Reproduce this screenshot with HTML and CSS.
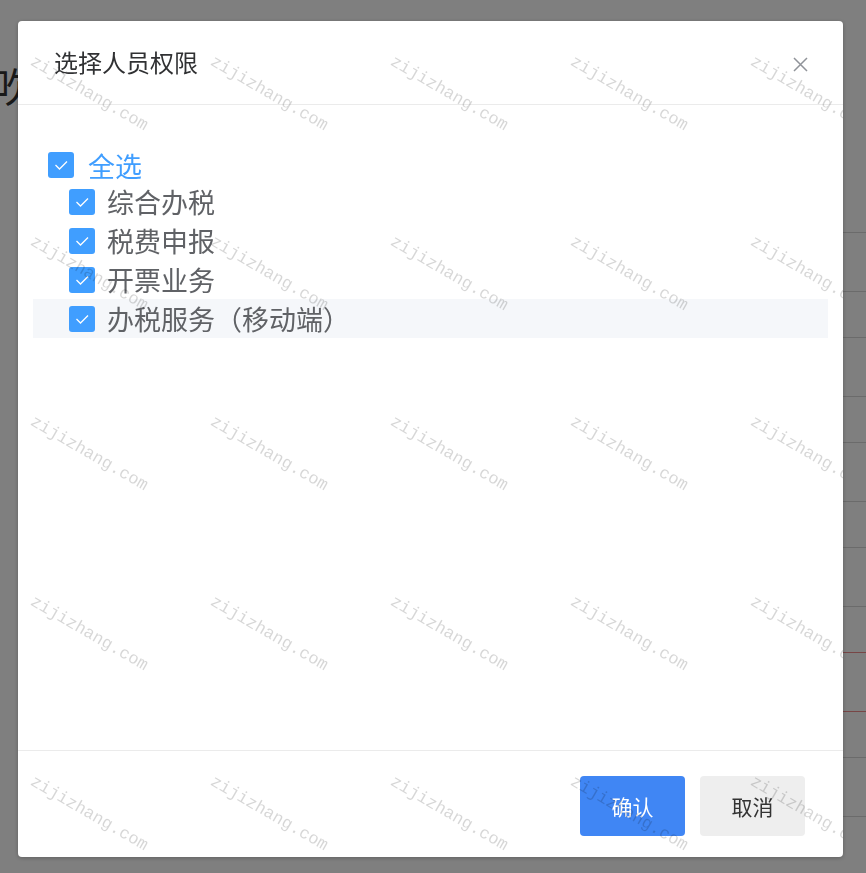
FILE: index.html
```html
<!DOCTYPE html>
<html lang="zh-CN">
<head>
<meta charset="utf-8">
<title>选择人员权限</title>
<link rel="stylesheet" href="styles.css">
</head>
<body>
<div class="page">
  <div class="page-head">吹</div>
  <div class="table">
    <div class="row tall"></div>
    <div class="row short"></div>
    <div class="row tall"></div>
    <div class="row short"></div>
    <div class="row tall"></div>
    <div class="row short"></div>
    <div class="row tall"></div>
    <div class="row short flag"></div>
    <div class="row tall flag"></div>
    <div class="row short"></div>
    <div class="row tall"></div>
  </div>
</div>

<div class="mask">
  <div class="dialog">
    <div class="dialog-header">
      <span class="dialog-title">选择人员权限</span>
      <button class="dialog-close" type="button" aria-label="关闭">
        <svg width="15" height="15" viewBox="0 0 15 15"><path d="M1 1 L14 14 M14 1 L1 14" stroke="#909399" stroke-width="1.5" fill="none"/></svg>
      </button>
    </div>

    <div class="dialog-body">
      <div class="tree">
        <div class="tree-node root">
          <span class="checkbox"><svg width="26" height="26" viewBox="0 0 26 26"><polyline points="7.5,13 11.5,17 19,9.5" fill="none" stroke="#fff" stroke-width="1.3"/></svg></span>
          <span class="label">全选</span>
        </div>
        <div class="tree-node child">
          <span class="checkbox"><svg width="26" height="26" viewBox="0 0 26 26"><polyline points="7.5,13 11.5,17 19,9.5" fill="none" stroke="#fff" stroke-width="1.3"/></svg></span>
          <span class="label">综合办税</span>
        </div>
        <div class="tree-node child">
          <span class="checkbox"><svg width="26" height="26" viewBox="0 0 26 26"><polyline points="7.5,13 11.5,17 19,9.5" fill="none" stroke="#fff" stroke-width="1.3"/></svg></span>
          <span class="label">税费申报</span>
        </div>
        <div class="tree-node child">
          <span class="checkbox"><svg width="26" height="26" viewBox="0 0 26 26"><polyline points="7.5,13 11.5,17 19,9.5" fill="none" stroke="#fff" stroke-width="1.3"/></svg></span>
          <span class="label">开票业务</span>
        </div>
        <div class="tree-node child is-hover">
          <span class="checkbox"><svg width="26" height="26" viewBox="0 0 26 26"><polyline points="7.5,13 11.5,17 19,9.5" fill="none" stroke="#fff" stroke-width="1.3"/></svg></span>
          <span class="label">办税服务（移动端）</span>
        </div>
      </div>
    </div>

    <div class="dialog-footer">
      <button class="btn btn-primary" type="button">确认</button>
      <button class="btn btn-default" type="button">取消</button>
    </div>

    <div class="watermark">
      <span>zijizhang.com</span><span>zijizhang.com</span><span>zijizhang.com</span><span>zijizhang.com</span><span>zijizhang.com</span>
      <span>zijizhang.com</span><span>zijizhang.com</span><span>zijizhang.com</span><span>zijizhang.com</span><span>zijizhang.com</span>
      <span>zijizhang.com</span><span>zijizhang.com</span><span>zijizhang.com</span><span>zijizhang.com</span><span>zijizhang.com</span>
      <span>zijizhang.com</span><span>zijizhang.com</span><span>zijizhang.com</span><span>zijizhang.com</span><span>zijizhang.com</span>
      <span>zijizhang.com</span><span>zijizhang.com</span><span>zijizhang.com</span><span>zijizhang.com</span><span>zijizhang.com</span>
    </div>
  </div>
</div>
</body>
</html>
```

FILE: styles.css
```css
html, body {
  margin: 0;
  padding: 0;
}

body {
  font-family: "Noto Sans CJK SC", "Noto Sans", sans-serif;
  background: #fff;
  color: #333;
}

/* page underneath the modal */
.page {
  height: 873px;
  overflow: hidden;
}

.page-head {
  padding-top: 55px;
  height: 60px;
  margin-left: -7px;
  font-size: 40px;
  line-height: 60px;
  color: #333;
}

.table {
  margin-top: 117px;
  margin-left: 420px;
  border-top: 1px solid #d6d6d6;
}

.row {
  box-sizing: border-box;
  border-bottom: 1px solid #d6d6d6;
}

.row.tall { height: 59px; }
.row.short { height: 46px; }
.row.flag { border-bottom-color: #f08c8c; }

/* modal */
.mask {
  position: fixed;
  inset: 0;
  background: rgba(0, 0, 0, 0.5);
  box-sizing: border-box;
  padding: 21px 23px 16px 18px;
  display: flex;
}

.dialog {
  position: relative;
  flex: 1;
  display: flex;
  flex-direction: column;
  background: #fff;
  border-radius: 4px;
  overflow: hidden;
  box-shadow: 0 1px 4px rgba(0, 0, 0, 0.25);
}

.dialog-header {
  display: flex;
  align-items: center;
  justify-content: space-between;
  padding: 23px 35px 24px 36px;
  border-bottom: 1px solid #ebebeb;
}

.dialog-title {
  font-size: 24px;
  line-height: 36px;
  color: #303133;
}

.dialog-close {
  display: flex;
  width: 15px;
  height: 15px;
  padding: 0;
  margin-top: 5px;
  border: 0;
  background: none;
}

.dialog-body {
  flex: 1;
  padding: 43px 15px 0;
}

.tree-node {
  display: flex;
  align-items: center;
}

.tree-node.root {
  height: 34px;
  padding-left: 15px;
}

.tree-node.child {
  height: 39px;
  padding-left: 36px;
}

.tree-node.is-hover {
  background: #f5f7fa;
}

.checkbox {
  display: flex;
  width: 26px;
  height: 26px;
  border-radius: 3px;
  background: #409eff;
  flex: none;
}

.label {
  font-size: 27px;
  line-height: 39px;
  color: #606266;
  margin-left: 12px;
  white-space: nowrap;
}

.root .label {
  color: #409eff;
  margin-left: 14px;
}

.dialog-footer {
  display: flex;
  justify-content: flex-end;
  gap: 15px;
  padding: 25px 38px 21px;
  border-top: 1px solid #ebebeb;
}

.btn {
  width: 105px;
  height: 60px;
  border: 0;
  border-radius: 4px;
  font-family: "Noto Sans CJK SC", sans-serif;
  font-size: 21px;
  padding: 0;
}

.btn-primary {
  background: #4086f4;
  color: #fff;
}

.btn-default {
  background: #eeeeee;
  color: #333;
}

/* repeated site stamp across the dialog */
.watermark {
  position: absolute;
  left: 18px;
  top: 32px;
  display: grid;
  grid-template-columns: repeat(5, 180px);
  grid-auto-rows: 180px;
  pointer-events: none;
}

.watermark span {
  display: block;
  width: max-content;
  font-family: "Liberation Mono", monospace;
  font-size: 17px;
  line-height: 1;
  color: rgba(0, 0, 0, 0.16);
  white-space: nowrap;
  transform: rotate(30deg);
  transform-origin: 0 0;
}
```
